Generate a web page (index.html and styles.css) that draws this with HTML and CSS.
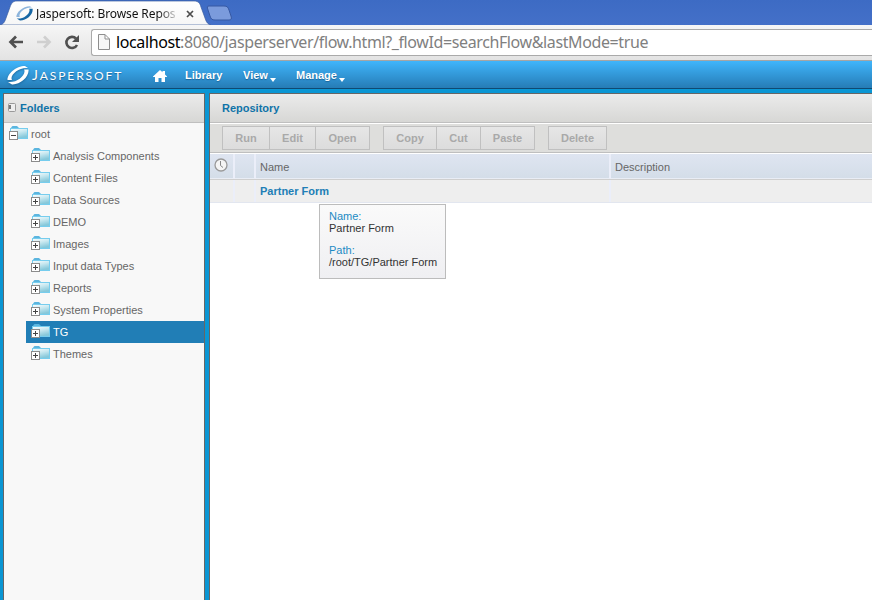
FILE: index.html
```html
<!DOCTYPE html>
<html lang="en">
<head>
    <meta charset="UTF-8">
    <title>Jaspersoft: Browse Repository</title>
    <link rel="stylesheet" href="styles.css">
</head>
<body>
    <svg class="defs" width="0" height="0">
        <defs>
            <linearGradient id="folder-fill" x1="0" y1="0" x2="0.4" y2="1">
                <stop offset="0" stop-color="#ffffff"/>
                <stop offset="0.5" stop-color="#c8e8f0"/>
                <stop offset="1" stop-color="#86c8da"/>
            </linearGradient>
            <linearGradient id="tab-fill" x1="0" y1="0" x2="0" y2="1">
                <stop offset="0" stop-color="#ffffff"/>
                <stop offset="1" stop-color="#f6f6f6"/>
            </linearGradient>
        </defs>
        <symbol id="folder" viewBox="0 0 20 14">
            <path d="M2 3V1.5L3.5 0H8l1.5 1.5V3z" fill="#5bb5df"/>
            <rect x="1.5" y="2.5" width="17" height="10" fill="url(#folder-fill)" stroke="#76cdee"/>
            <rect x="0.5" y="5.5" width="8" height="8" fill="#fff" stroke="#8c8c8c"/>
            <path d="M2 9.5h5" stroke="#444"/>
        </symbol>
        <symbol id="folder-closed" viewBox="0 0 20 14">
            <use href="#folder" width="20" height="14"/>
            <path d="M4.5 7v5" stroke="#444"/>
        </symbol>
        <symbol id="swirl" viewBox="0 0 22 19">
            <path d="M.5 14C0 8 9 0 18 0l3 2C13 1 5 7 4.500 12c0 1 .5 2 .5 2z"/>
            <path class="swirl-end" d="M21.500 3.500C22.500 11 13 19 5 18.500L1 16c8 1 16-5 16.500-10.500 0-1.500-.5-2-.5-2z"/>
        </symbol>
    </svg>

    <div class="tabstrip">
        <svg class="tab-shape" width="236" height="25" viewBox="0 0 236 25">
            <path d="M0 25c4-1 5-4 6-7l4-11c1.500-4 3-6 7-6h177c4 0 6 2 7 6l4 11c1 3 2 6 6 7z" fill="url(#tab-fill)" stroke="#3a5c9e" stroke-width=".7"/>
            <path d="M209 6h15c3 0 4 1 5 4l2 6c1 3 0 4-2 4h-14c-3 0-4-1-5-4l-2-6c-1-3-1-4 1-4z" fill="#7b9bdc" stroke="#3658a2"/>
        </svg>
        <div class="tab">
            <svg class="favicon" width="17" height="15"><use href="#swirl" width="17" height="15"/></svg>
            <span class="tab-title">Jaspersoft: Browse Repos</span>
            <svg class="tab-close" width="8" height="8" viewBox="0 0 8 8"><path d="M1 1l6 6M7 1L1 7" stroke="#4c4c4c" stroke-width="1.7"/></svg>
        </div>
    </div>

    <div class="browser-bar">
        <svg width="16" height="14" viewBox="0 0 16 14" fill="none" stroke="#505050" stroke-width="2.7"><path d="M15 7H3M8 1.500L2.500 7 8 12.500"/></svg>
        <svg width="16" height="14" viewBox="0 0 16 14" fill="none" stroke="#cfcfcf" stroke-width="2.7"><path d="M1 7h12M8 1.500L13.500 7 8 12.500"/></svg>
        <svg width="16" height="15" viewBox="0 0 16 15"><path d="M12 3.500A5.600 5.600 0 1 0 13 10" fill="none" stroke="#505050" stroke-width="2.6"/><path d="M15 0v7H8z" fill="#505050"/></svg>
        <div class="address">
            <svg width="12" height="16" viewBox="0 0 12 16" fill="#f7f7f7" stroke="#8e8e8e"><path d="M.5.5h6.500l4.500 4.500v10.500H.5zM7 .5V5h4.500"/></svg>
            <span class="url"><b>localhost</b>:8080/jasperserver/flow.html?_flowId=searchFlow&amp;lastMode=true</span>
        </div>
    </div>

    <div class="banner">
        <svg class="logo" width="22" height="19"><use href="#swirl" width="22" height="19"/></svg>
        <span class="brand"><span class="brand-cap">J</span>ASPERSOFT</span>
        <svg class="home" width="14" height="12" viewBox="0 0 14 12"><path d="M7 0l2.500 2.300V1H12v3.500L14 6.500V7h-2v5H8.500V8h-3v4H2V7H0v-.5z" fill="#fff"/></svg>
        <span class="menu-item library">Library</span>
        <span class="menu-item view">View<i class="arrow"></i></span>
        <span class="menu-item">Manage<i class="arrow"></i></span>
    </div>

    <div class="workspace">
        <div class="panel folders">
            <div class="panel-header">
                <svg width="8" height="9" viewBox="0 0 8 9"><rect x=".5" y=".5" width="7" height="8" rx="1" fill="#eee" stroke="#999"/><path d="M1 2h2v4H1z" fill="#777"/></svg>
                <span>Folders</span>
            </div>
            <div class="tree">
                <div class="node root"><svg width="20" height="14"><use href="#folder" width="20" height="14"/></svg>root</div>
                <div class="node"><svg width="20" height="14"><use href="#folder-closed" width="20" height="14"/></svg>Analysis Components</div>
                <div class="node"><svg width="20" height="14"><use href="#folder-closed" width="20" height="14"/></svg>Content Files</div>
                <div class="node"><svg width="20" height="14"><use href="#folder-closed" width="20" height="14"/></svg>Data Sources</div>
                <div class="node"><svg width="20" height="14"><use href="#folder-closed" width="20" height="14"/></svg>DEMO</div>
                <div class="node"><svg width="20" height="14"><use href="#folder-closed" width="20" height="14"/></svg>Images</div>
                <div class="node"><svg width="20" height="14"><use href="#folder-closed" width="20" height="14"/></svg>Input data Types</div>
                <div class="node"><svg width="20" height="14"><use href="#folder-closed" width="20" height="14"/></svg>Reports</div>
                <div class="node"><svg width="20" height="14"><use href="#folder-closed" width="20" height="14"/></svg>System Properties</div>
                <div class="node selected"><svg width="20" height="14"><use href="#folder-closed" width="20" height="14"/></svg>TG</div>
                <div class="node"><svg width="20" height="14"><use href="#folder-closed" width="20" height="14"/></svg>Themes</div>
            </div>
        </div>

        <div class="panel repository">
            <div class="panel-header">Repository</div>
            <div class="toolbar">
                <div class="button-group">
                    <button class="run">Run</button>
                    <button class="edit">Edit</button>
                    <button class="open">Open</button>
                </div>
                <div class="button-group">
                    <button class="copy">Copy</button>
                    <button class="cut">Cut</button>
                    <button class="paste">Paste</button>
                </div>
                <div class="button-group">
                    <button class="delete">Delete</button>
                </div>
            </div>
            <div class="list-row list-header">
                <div class="clock-cell"><svg width="14" height="14" viewBox="0 0 14 14" fill="none"><circle cx="7" cy="7" r="6" fill="#f4f4f4" stroke="#999" stroke-width="1.3"/><path d="M6.500 3v4.500L9 9.500" stroke="#888"/></svg></div>
                <div></div>
                <div>Name</div>
                <div>Description</div>
            </div>
            <div class="list-row list-item">
                <div></div>
                <div></div>
                <div>Partner Form</div>
                <div></div>
            </div>
        </div>
    </div>

    <div class="tooltip">
        <div class="tip-label">Name:</div>
        <div>Partner Form</div>
        <div class="tip-label path">Path:</div>
        <div>/root/TG/Partner Form</div>
    </div>
</body>
</html>
```
FILE: styles.css
```css
* {
    box-sizing: border-box;
}

body {
    margin: 0;
    width: 872px;
    height: 600px;
    overflow: hidden;
    display: flex;
    flex-direction: column;
    position: relative;
    font-family: "Liberation Sans", Arial, sans-serif;
    font-size: 11px;
    color: #666;
    background: #0a96d4;
}

svg {
    flex: none;
    display: block;
}

.defs {
    position: absolute;
}

/* browser window */
.tabstrip {
    height: 25px;
    flex: none;
    position: relative;
    background: linear-gradient(#3d6bc4, #4470c8);
}

.tab-shape {
    position: absolute;
    left: 0;
    top: 0;
}

.tab {
    position: relative;
    display: flex;
    align-items: center;
    height: 25px;
    padding: 2px 0 0 16px;
}

.favicon {
    fill: #8db4dc;
    color: #1767a5;
}

.swirl-end {
    fill: currentColor;
}

.tab-title {
    width: 144px;
    margin-left: 3px;
    white-space: nowrap;
    font: 12px/18px "Noto Sans", sans-serif;
    letter-spacing: -0.1px;
    color: #111;
    -webkit-mask-image: linear-gradient(90deg, #000 122px, transparent 144px);
}

.tab-close {
    margin-left: 6px;
}

.browser-bar {
    height: 36px;
    flex: none;
    display: flex;
    align-items: center;
    gap: 12px;
    padding: 0 0 1px 8px;
    background: linear-gradient(#f6f6f6, #e3e3e3);
    border-bottom: 1px solid #a5a5a5;
}

.address {
    flex: 1;
    height: 27px;
    display: flex;
    align-items: center;
    gap: 6px;
    padding-left: 6px;
    margin-left: -1px;
    background: #fff;
    border: 1px solid #aaa;
    border-right: 0;
    border-radius: 3px 0 0 3px;
}

.url {
    font: 16px/24px "Noto Sans", sans-serif;
    letter-spacing: -0.39px;
    white-space: nowrap;
    color: #808080;
}

.url b {
    font-weight: normal;
    color: #000;
}

/* application banner */
.banner {
    height: 28px;
    flex: none;
    display: flex;
    align-items: center;
    padding: 1px 0 0 7px;
    color: #fff;
    background: linear-gradient(#40b5fb, #267cb6);
    border-bottom: 1px solid #0f4a73;
}

.logo {
    fill: #fff;
    filter: drop-shadow(0 1px 1px #1c669b);
}

.brand {
    width: 123px;
    margin-left: 3px;
    font: 12px/20px Lato, sans-serif;
    letter-spacing: 1.9px;
    text-shadow: 0 1px 1px #1c669b;
}

.brand-cap {
    font-size: 14px;
}

.home {
    margin: 1px 18px 0 -2px;
}

.menu-item {
    display: flex;
    font-weight: bold;
    text-shadow: 0 1px 1px #1c669b;
}

.library {
    width: 58px;
}

.view {
    width: 53px;
}

.arrow {
    margin: 9px 0 -1px 2px;
    height: 4px;
    border: 3px solid transparent;
    border-top: 4px solid #fff;
    border-bottom: 0;
}

/* panels */
.workspace {
    flex: 1;
    display: flex;
    gap: 4px;
    padding: 4px 0 0 3px;
}

.panel {
    border: 1px solid #666;
    border-bottom: 0;
}

.folders {
    width: 202px;
    background: #f8f8f8;
}

.repository {
    flex: 1;
    border-right: 0;
    background: #fff;
}

.panel-header {
    height: 29px;
    display: flex;
    align-items: center;
    font-weight: bold;
    color: #0f73a8;
    background: linear-gradient(#ebebeb, #d7d7d5);
    border-bottom: 1px solid #bfbfbf;
}

.folders .panel-header {
    gap: 4px;
    padding-left: 4px;
}

.folders .panel-header svg {
    margin-bottom: 1px;
}

.repository .panel-header {
    padding-left: 12px;
}

.node {
    height: 22px;
    margin-left: 22px;
    padding-left: 5px;
    display: flex;
    align-items: center;
    gap: 2px;
    white-space: nowrap;
}

.node svg {
    margin-bottom: 2px;
}

.node.root {
    margin-left: 0;
}

.node.selected {
    color: #fff;
    background: #217eb6;
}

.toolbar {
    height: 29px;
    margin: 1px 0;
    padding: 2px 0 0 12px;
    display: flex;
    gap: 13px;
    background: #dededc;
    border-bottom: 1px solid #bfbfbf;
}

.button-group {
    height: 24px;
    display: flex;
    border: 1px solid #c0c0c0;
}

button {
    padding: 0;
    border: 0;
    border-left: 1px solid #c0c0c0;
    font: bold 11px "Liberation Sans", Arial, sans-serif;
    color: #a9a9a9;
    background: linear-gradient(#e6e6e6, #dcdcdc);
}

button:first-child {
    border-left: 0;
}

.run {
    width: 46px;
}

.edit {
    width: 46px;
}

.open {
    width: 54px;
}

.copy {
    width: 52px;
}

.cut {
    width: 44px;
}

.paste {
    width: 54px;
}

.delete {
    width: 57px;
}

.list-row {
    display: grid;
    grid-template-columns: 25px 21px 355px 1fr;
}

.list-row > div {
    display: flex;
    align-items: center;
    padding-left: 4px;
    border-right: 2px solid #ebeef9;
}

.list-row > div:last-child {
    border-right: 0;
}

.list-header {
    height: 26px;
    background: linear-gradient(#dfe5f1, #d3dde8);
    border-bottom: 1px solid #cfcfcf;
}

.list-header > div {
    padding-top: 2px;
    border-bottom: 1px solid #e9edf5;
}

.list-header .clock-cell {
    padding: 0 0 3px 4px;
}

.list-item {
    height: 23px;
    font-weight: bold;
    color: #217eb6;
    background: #eee;
    border-bottom: 1px solid #e2e6ef;
}

.tooltip {
    position: absolute;
    left: 319px;
    top: 204px;
    width: 127px;
    height: 75px;
    padding: 5px 0 0 9px;
    line-height: 12px;
    white-space: nowrap;
    color: #333;
    background: linear-gradient(#fafafa, #efeff2);
    border: 1px solid #bcbcbc;
}

.tip-label {
    color: #1c8ac4;
}

.path {
    margin-top: 10px;
}
```
